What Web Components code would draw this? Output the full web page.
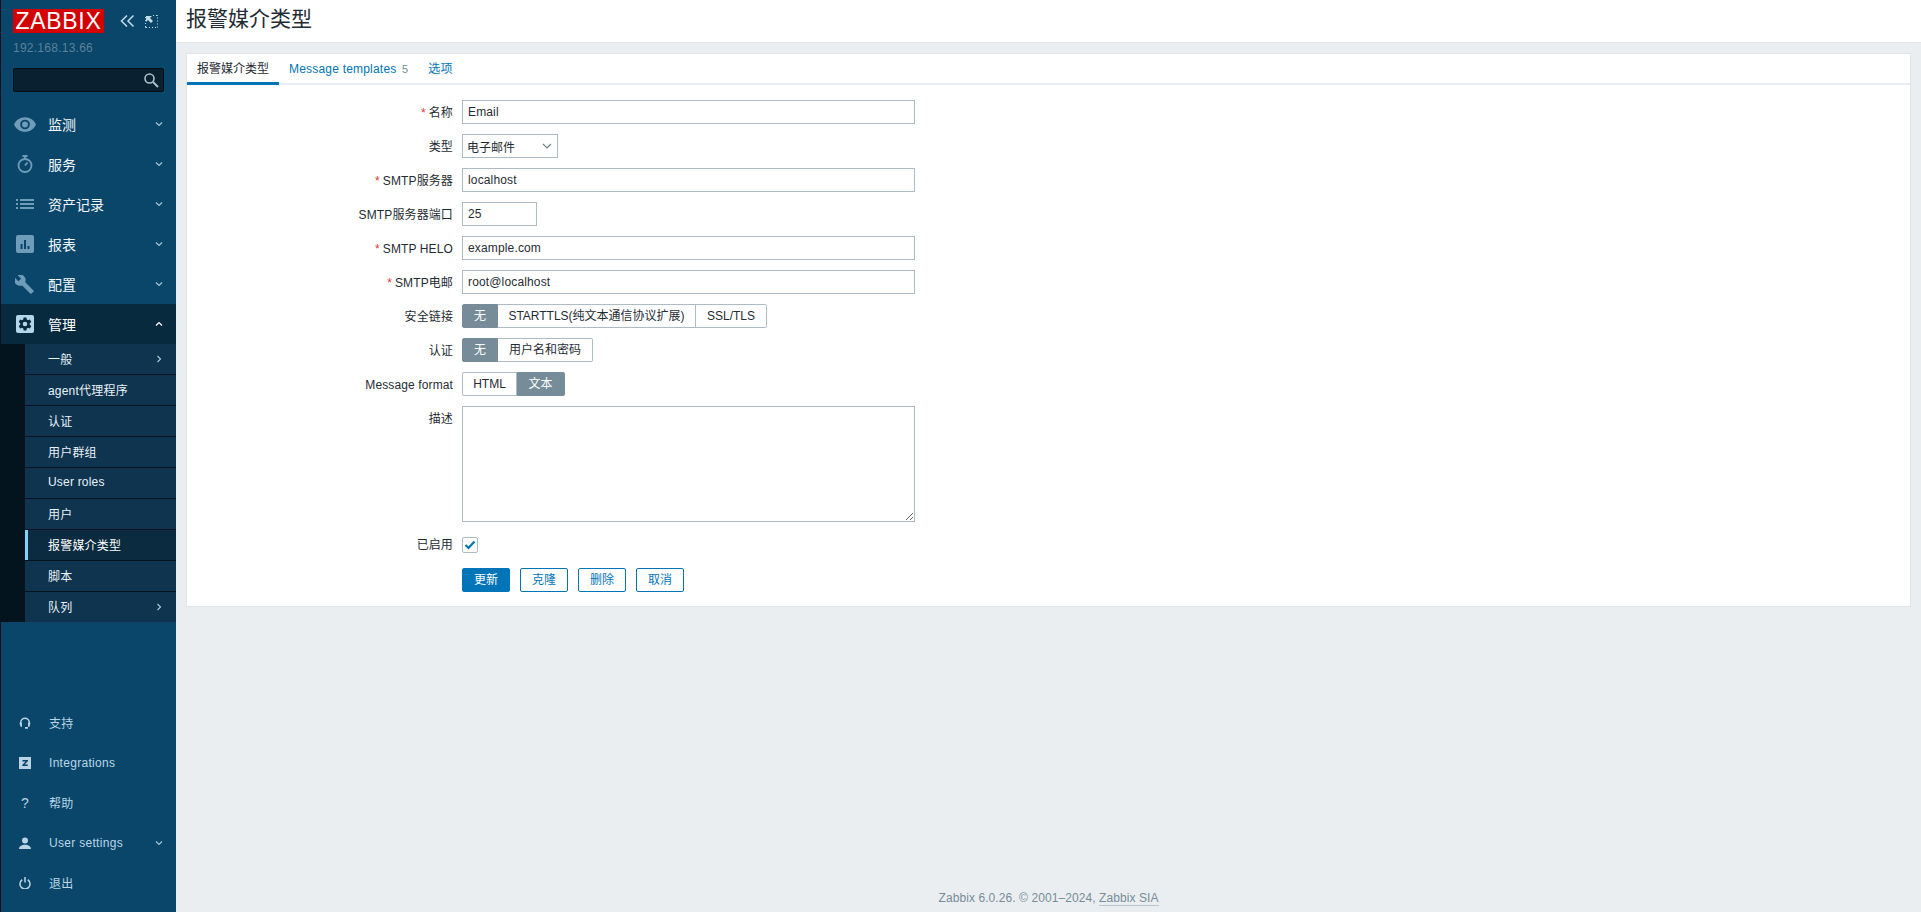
<!DOCTYPE html>
<html lang="zh"><head><meta charset="utf-8"><title>报警媒介类型</title>
<style>
html,body{margin:0;padding:0;height:912px;overflow:hidden;background:#ebeef0}
body{font:12px "Liberation Sans","Noto Sans CJK SC",Arial,sans-serif;color:#1f2c33}
</style></head><body>
<zbx-app>
  <zbx-sidebar slot="side">
    <zbx-nav slot="nav" label="监测" more="down"><svg viewBox="0 0 24 16" width="22" height="15"><path fill="#6f9cb9" fill-rule="evenodd" d="M12 0C6.500 0 2 3.300 0 8c2 4.700 6.500 8 12 8s10-3.300 12-8c-2-4.700-6.500-8-12-8zm0 13.300a5.300 5.300 0 1 1 0-10.600 5.300 5.300 0 0 1 0 10.600zm0-8.500a3.200 3.200 0 1 0 0 6.400 3.200 3.200 0 0 0 0-6.400z"/></svg></zbx-nav>
    <zbx-nav slot="nav" label="服务" more="down"><svg viewBox="0 0 16 18" width="16" height="18"><g fill="none" stroke="#6f9cb9" stroke-width="1.800"><circle cx="8" cy="10.500" r="6.500"/><path d="M5.500 1h5M8 1v3M8 10.500l2.500-3"/></g></svg></zbx-nav>
    <zbx-nav slot="nav" label="资产记录" more="down"><svg viewBox="0 0 18 10" width="18" height="10"><path fill="#6f9cb9" d="M0 0h2v2H0zM4 0h14v2H4zM0 4h2v2H0zM4 4h14v2H4zM0 8h2v2H0zM4 8h14v2H4z"/></svg></zbx-nav>
    <zbx-nav slot="nav" label="报表" more="down"><svg viewBox="0 0 18 18" width="18" height="18"><path fill="#6f9cb9" fill-rule="evenodd" d="M2 0h14a2 2 0 0 1 2 2v14a2 2 0 0 1-2 2H2a2 2 0 0 1-2-2V2a2 2 0 0 1 2-2zm2.500 9v5h2V9zM8 5v9h2V5zm3.500 6v3h2v-3z"/></svg></zbx-nav>
    <zbx-nav slot="nav" label="配置" more="down"><svg viewBox="0 0 24 24" width="19" height="19"><path fill="#6f9cb9" d="M23.300 19.500 13 9.200c1-2.700.4-5.800-1.800-8C8.900-1.100 5.500-1.500 2.800-.3l4.900 4.900-3.400 3.400-4.900-5C-1.900 5.700-1.300 9.100 1 11.400c2.200 2.200 5.300 2.800 8 1.800l10.300 10.300c.4.400 1.100.4 1.600 0l2.400-2.400c.5-.5.500-1.200 0-1.600z"/></svg></zbx-nav>
    <zbx-nav slot="nav" label="管理" more="up" open><svg viewBox="0 0 18 18" width="18" height="18"><path fill="#b4d6ea" fill-rule="evenodd" d="M2 0h14a2 2 0 0 1 2 2v14a2 2 0 0 1-2 2H2a2 2 0 0 1-2-2V2a2 2 0 0 1 2-2zm5.600 2.500-.3 2a5 5 0 0 0-1.300.8l-1.900-.8-1.400 2.500 1.600 1.200a5 5 0 0 0 0 1.600l-1.600 1.200 1.400 2.500 1.900-.8a5 5 0 0 0 1.300.8l.3 2h2.800l.3-2a5 5 0 0 0 1.300-.8l1.900.8 1.400-2.500-1.600-1.200a5 5 0 0 0 0-1.600l1.600-1.200-1.400-2.500-1.900.8a5 5 0 0 0-1.300-.8l-.3-2zM9 6.700a2.300 2.300 0 1 1 0 4.600 2.300 2.300 0 0 1 0-4.600z"/></svg></zbx-nav>
    <zbx-submenu slot="nav">
      <zbx-sub more>一般</zbx-sub>
      <zbx-sub>agent代理程序</zbx-sub>
      <zbx-sub>认证</zbx-sub>
      <zbx-sub>用户群组</zbx-sub>
      <zbx-sub>User roles</zbx-sub>
      <zbx-sub>用户</zbx-sub>
      <zbx-sub active>报警媒介类型</zbx-sub>
      <zbx-sub>脚本</zbx-sub>
      <zbx-sub more>队列</zbx-sub>
    </zbx-submenu>
    <zbx-nav slot="foot" small label="支持"><svg viewBox="0 0 24 24" width="12" height="12"><path fill="none" stroke="#b9d3e2" stroke-width="3" d="M3.500 15v-4a8.500 8.500 0 0 1 17 0v4"/><path fill="#b9d3e2" d="M1 11.500h5v8H3zM18 11.500h5l-2 8h-3zM12 20h6v3.500h-6z"/></svg></zbx-nav>
    <zbx-nav slot="foot" small label="Integrations"><svg viewBox="0 0 24 24" width="12" height="12"><path fill="#b9d3e2" fill-rule="evenodd" d="M0 0h24v24H0zM7 6v3h6l-6.500 7v2h11v-3h-6l6.500-7V6z"/></svg></zbx-nav>
    <zbx-nav slot="foot" small label="帮助"><span style="color:#b9d3e2;font:14px 'Liberation Sans',sans-serif">?</span></zbx-nav>
    <zbx-nav slot="foot" small label="User settings" more="down"><svg viewBox="0 0 24 24" width="12" height="12"><path fill="#b9d3e2" d="M12 1a6 6 0 1 1 0 12 6 6 0 0 1 0-12zM0 24c0-5 5-8.500 12-8.500S24 19 24 24z"/></svg></zbx-nav>
    <zbx-nav slot="foot" small label="退出"><svg viewBox="0 0 24 24" width="12" height="12"><g fill="none" stroke="#b9d3e2" stroke-width="3"><path d="M6.500 5.500a10 10 0 1 0 11 0"/><path d="M12 0v11"/></g></svg></zbx-nav>
  </zbx-sidebar>
  <zbx-header slot="head">报警媒介类型</zbx-header>
  <zbx-card slot="main">
    <zbx-tabs>
      <zbx-tab active>报警媒介类型</zbx-tab>
      <zbx-tab>Message templates <small>5</small></zbx-tab>
      <zbx-tab>选项</zbx-tab>
    </zbx-tabs>
    <zbx-form>
      <zbx-field label="名称" req><zbx-input w="453">Email</zbx-input></zbx-field>
      <zbx-field label="类型"><zbx-select>电子邮件</zbx-select></zbx-field>
      <zbx-field label="SMTP服务器" req><zbx-input w="453">localhost</zbx-input></zbx-field>
      <zbx-field label="SMTP服务器端口"><zbx-input w="75">25</zbx-input></zbx-field>
      <zbx-field label="SMTP HELO" req><zbx-input w="453">example.com</zbx-input></zbx-field>
      <zbx-field label="SMTP电邮" req><zbx-input w="453">root@localhost</zbx-input></zbx-field>
      <zbx-field label="安全链接"><zbx-seg><zbx-opt on w="36">无</zbx-opt><zbx-opt w="198">STARTTLS(纯文本通信协议扩展)</zbx-opt><zbx-opt w="71">SSL/TLS</zbx-opt></zbx-seg></zbx-field>
      <zbx-field label="认证"><zbx-seg><zbx-opt on w="36">无</zbx-opt><zbx-opt w="95">用户名和密码</zbx-opt></zbx-seg></zbx-field>
      <zbx-field label="Message format"><zbx-seg><zbx-opt w="55">HTML</zbx-opt><zbx-opt on w="48">文本</zbx-opt></zbx-seg></zbx-field>
      <zbx-field label="描述"><zbx-textarea></zbx-textarea></zbx-field>
      <zbx-field label="已启用"><zbx-check></zbx-check></zbx-field>
      <zbx-field>
        <zbx-buttons>
          <zbx-btn primary>更新</zbx-btn><zbx-btn>克隆</zbx-btn><zbx-btn>删除</zbx-btn><zbx-btn>取消</zbx-btn>
        </zbx-buttons>
      </zbx-field>
    </zbx-form>
  </zbx-card>
  <zbx-footer slot="foot">Zabbix 6.0.26. © 2001–2024, <a>Zabbix SIA</a></zbx-footer>
</zbx-app>
<script>
const FONT = '"Liberation Sans","Noto Sans CJK SC",Arial,sans-serif';
function def(name, css, html, extra) {
  const t = document.createElement('template');
  t.innerHTML = `<style>${css}</style>${html}`;
  customElements.define(name, class extends HTMLElement {
    constructor() { super(); this.attachShadow({mode:'open'}).appendChild(t.content.cloneNode(true)); }
    connectedCallback() { if (extra) extra(this, this.shadowRoot); }
  });
}
const chev = {
  down:'<svg viewBox="0 0 8 6" width="8" height="6"><path d="M1 1.500l3 3 3-3" fill="none" stroke="#a9c5d6" stroke-width="1.200"/></svg>',
  up:'<svg viewBox="0 0 8 6" width="8" height="6"><path d="M1 4.500l3-3 3 3" fill="none" stroke="#ffffff" stroke-width="1.200"/></svg>',
  right:'<svg viewBox="0 0 6 8" width="6" height="8"><path d="M1.500 1l3 3-3 3" fill="none" stroke="#a9c5d6" stroke-width="1.200"/></svg>'
};
def('zbx-app', `:host{display:grid;grid-template-columns:176px 1fr;grid-template-rows:43px 1fr auto;width:1921px;height:912px}
  ::slotted([slot=side]){grid-row:1/4;grid-column:1}
  .h{grid-column:2;grid-row:1;display:flex}.m{grid-column:2;grid-row:2;display:flex;flex-direction:column}.f{grid-column:2;grid-row:3}`,
  `<slot name="side"></slot><div class="h"><slot name="head"></slot></div><div class="m"><slot name="main"></slot></div><div class="f"><slot name="foot"></slot></div>`);
def('zbx-sidebar', `:host{display:flex;flex-direction:column;background:#0a466a;height:912px;box-sizing:border-box;width:176px;border-left:1px solid #04141f}
  .brand{display:flex;align-items:center;height:24px;margin:9px 0 0 12px}
  .logo{width:91px;height:24px;background:#d40000;color:#fff;font:23px/24px ${FONT};text-align:center;letter-spacing:.7px}
  .ctl{margin-left:16px;display:flex;gap:10px;align-items:center}
  .ip{margin:8px 0 0 12px;color:#5d8198;font-size:12px;line-height:14px;letter-spacing:.25px}
  .search{margin:13px 0 0 12px;width:151px;height:24px;box-sizing:border-box;background:#08202f;border:1px solid #030d14;border-radius:2px;display:flex;align-items:center;justify-content:flex-end;padding-right:4px}
  .nav{margin-top:12px}.foot{margin-top:auto;padding-bottom:9px}`,
  `<div class="brand"><div class="logo">ZABBIX</div><div class="ctl">
     <svg viewBox="0 0 15 14" width="15" height="14"><path d="M7 1.500 1.500 7 7 12.500M13.500 1.500 8 7l5.500 5.500" fill="none" stroke="#c6dbe8" stroke-width="1.500"/></svg>
     <svg viewBox="0 0 13 13" width="13" height="13"><path d="M.5 2v1M.5 5v1M.5 8v1M.5 11v1.500H2M4 12.500h1M7 12.500h1M10 12.500h1M12.500 12.500v-1M12.500 9.500v-1M12.500 6.500v-1M12.500 3.500v-1M12.500 1V.5H11M9 .5H8" fill="none" stroke="#c6dbe8"/><path d="M1 1h6L5 3l3 3-2 2-3-3-2 2z" fill="#c6dbe8"/></svg>
   </div></div>
   <div class="ip">192.168.13.66</div>
   <div class="search"><svg viewBox="0 0 16 16" width="16" height="16"><circle cx="6.500" cy="6.500" r="4.500" fill="none" stroke="#a9c0cd" stroke-width="1.600"/><path d="M10 10l5 5" stroke="#a9c0cd" stroke-width="2"/></svg></div>
   <div class="nav"><slot name="nav"></slot></div><div class="foot"><slot name="foot"></slot></div>`);
def('zbx-nav', `:host{display:flex;align-items:center;height:40px;color:#f2f7fa;font-size:14px}
  :host([open]){background:#082a3e;color:#fff}
  :host([small]){font-size:12px;color:#b9d6e8;letter-spacing:.3px}
  .i{width:47px;display:flex;justify-content:center;flex:none}
  :host([small]) .i{width:48px}
  .l{flex:1;white-space:nowrap;margin-top:-1px}
  .c{width:17px;flex:none;line-height:0;margin-right:4px}`,
  `<div class="i"><slot></slot></div><div class="l"></div><div class="c"></div>`,
  (el, r) => { r.querySelector('.l').textContent = el.getAttribute('label');
    const m = el.getAttribute('more'); if (m) r.querySelector('.c').innerHTML = chev[m]; });
def('zbx-submenu', `:host{display:block;background:#04141f;padding-left:24px}`, `<slot></slot>`);
def('zbx-sub', `:host{display:flex;align-items:center;height:30px;border-bottom:1px solid #04141f;background:#0e3450;color:#eaf2f7;font-size:12px;padding-left:23px;letter-spacing:.2px}
  :host([active]){background:#0a2b40;color:#fff;box-shadow:inset 3px 0 0 #84d0ff}
  :host(:last-child){border-bottom:0}
  .s{flex:1;white-space:nowrap;margin-top:-2px}.c{width:20px;line-height:0}`,
  `<span class="s"><slot></slot></span><span class="c"></span>`,
  (el, r) => { if (el.hasAttribute('more')) r.querySelector('.c').innerHTML = chev.right; });
def('zbx-header', `:host{display:block;flex:1;height:43px;box-sizing:border-box;background:#fff;border-bottom:1px solid #dfe4e7;padding-left:10px;color:#1f2c33;font-size:21px;line-height:38px}`, `<slot></slot>`);
def('zbx-card', `:host{display:block;margin:10px 10px 0 10px;background:#fff;border:1px solid #dfe4e7}`, `<slot></slot>`);
def('zbx-tabs', `:host{display:flex;height:31px;box-sizing:border-box;border-bottom:2px solid #ebeef0}`, `<slot></slot>`);
def('zbx-tab', `:host{display:block;padding:0 10px;height:31px;box-sizing:border-box;line-height:30px;color:#0275b8;font-size:12px;letter-spacing:.2px;white-space:nowrap}
  :host([active]){color:#1f2c33;border-bottom:3px solid #0275b8;letter-spacing:0}
  ::slotted(small){font-size:11px;color:#768d99;margin-left:2px}`, `<slot></slot>`);
def('zbx-form', `:host{display:flex;flex-direction:column;gap:10px;padding:15px 0 14px}`, `<slot></slot>`);
def('zbx-field', `:host{display:grid;grid-template-columns:266px 1fr;column-gap:9px;min-height:24px}
  .l{text-align:right;line-height:24px;height:24px;box-sizing:border-box;padding-top:1px;color:#1f2c33;font-size:12px;white-space:nowrap;letter-spacing:.12px}
  .r{color:#e33734;margin-right:3px}`,
  `<div class="l"></div><div><slot></slot></div>`,
  (el, r) => { const l = r.querySelector('.l'); const t = el.getAttribute('label') || '';
    if (el.hasAttribute('req')) { const s = document.createElement('span'); s.className='r'; s.textContent='*'; l.append(s); }
    l.append(t); });
def('zbx-input', `:host{display:block;height:24px;box-sizing:border-box;border:1px solid #acbbc4;background:#fff;padding:0 5px;line-height:22px;color:#1f2c33;font-size:12px;letter-spacing:.15px}`, `<slot></slot>`,
  (el) => { el.style.width = el.getAttribute('w') + 'px'; });
def('zbx-select', `:host{display:flex;align-items:center;justify-content:space-between;width:96px;height:24px;box-sizing:border-box;border:1px solid #acbbc4;padding:0 5px 0 4px;color:#1f2c33;font-size:12px}`,
  `<span><slot></slot></span><svg viewBox="0 0 10 6" width="10" height="6"><path d="M1 1l4 4 4-4" fill="none" stroke="#6f7f88" stroke-width="1.100"/></svg>`);
def('zbx-seg', `:host{display:flex;height:24px}`, `<slot></slot>`);
def('zbx-opt', `:host{display:block;height:24px;box-sizing:border-box;border:1px solid #acbbc4;border-left-width:0;text-align:center;line-height:22px;font-size:12px;color:#1f2c33;white-space:nowrap}
  :host(:first-child){border-left-width:1px;border-radius:2px 0 0 2px}
  :host(:last-child){border-radius:0 2px 2px 0}
  :host([on]){background:#768d99;border-color:#768d99;color:#fff}`, `<slot></slot>`,
  (el) => { el.style.width = el.getAttribute('w') + 'px'; });
def('zbx-textarea', `:host{display:block;width:453px;height:116px}
  textarea{display:block;width:453px;height:116px;box-sizing:border-box;border:1px solid #acbbc4;background:#fff;margin:0;padding:4px;outline:0;resize:both;font:12px ${FONT}}`, `<textarea aria-label="描述"></textarea>`);
def('zbx-check', `:host{display:flex;align-items:center;height:24px;padding-top:1px;box-sizing:border-box}
  .b{width:16px;height:16px;box-sizing:border-box;border:1px solid #acbbc4;border-radius:2px;display:flex;align-items:center;justify-content:center;background:#fff}`,
  `<div class="b"><svg viewBox="0 0 12 10" width="12" height="10"><path d="M1.500 5l3 3 6-6.500" fill="none" stroke="#0275b8" stroke-width="2.200"/></svg></div>`);
def('zbx-buttons', `:host{display:flex;gap:10px;margin-top:2px}`, `<slot></slot>`);
def('zbx-btn', `:host{display:block;width:48px;height:24px;box-sizing:border-box;border:1px solid #0275b8;border-radius:2px;color:#0275b8;text-align:center;line-height:22px;font-size:12px;background:#fff}
  :host([primary]){background:#0275b8;color:#fff}`, `<slot></slot>`);
def('zbx-footer', `:host{display:block;text-align:center;color:#768d99;font-size:12px;line-height:14px;padding:0 0 7px;letter-spacing:.08px}
  ::slotted(a){color:#768d99;border-bottom:1px solid #b9c6ce}`, `<slot></slot>`);
</script>
</body></html>
